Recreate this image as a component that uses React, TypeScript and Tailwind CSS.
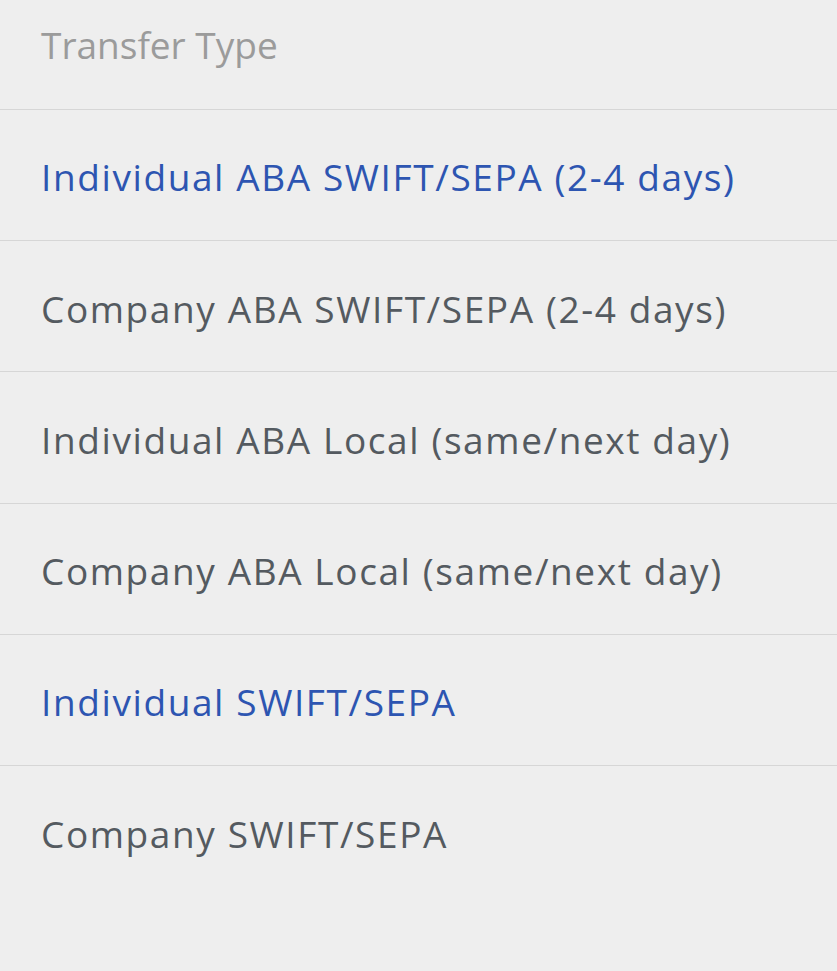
const options = [
  { label: 'Individual ABA SWIFT/SEPA (2-4 days)', active: true },
  { label: 'Company ABA SWIFT/SEPA (2-4 days)', active: false },
  { label: 'Individual ABA Local (same/next day)', active: false },
  { label: 'Company ABA Local (same/next day)', active: false },
  { label: 'Individual SWIFT/SEPA', active: true },
  { label: 'Company SWIFT/SEPA', active: false },
];

const App = () => {
  return (
    <section className="flex min-h-[971px] w-full flex-col bg-[#eeeeee] font-['Open_Sans',sans-serif]">
      <header className="flex h-[110px] items-center border-b border-[#d6d6d6] px-[41px] pb-[20px]">
        <h1 className="text-[37px] text-[#9b9b9b]">Transfer Type</h1>
      </header>
      {options.map((option, i) => (
        <div
          key={option.label}
          className={
            i === options.length - 1
              ? 'flex h-[131.2px] items-center px-[41px] pt-[4px]'
              : 'flex h-[131.2px] items-center border-b border-[#d6d6d6] px-[41px] pt-[4px]'
          }
        >
          <span
            className={
              option.active
                ? 'text-[37px] tracking-[1.6px] text-[#2d55b1]'
                : 'text-[37px] tracking-[1.6px] text-[#545a60]'
            }
          >
            {option.label}
          </span>
        </div>
      ))}
    </section>
  );
};

export default App;
